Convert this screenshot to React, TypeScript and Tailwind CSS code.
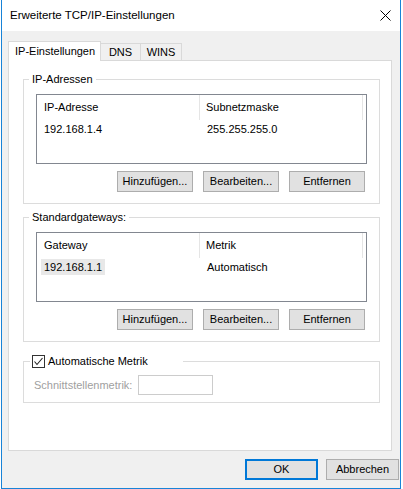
import React from "react";

const FONT = { fontFamily: '"Liberation Sans", Arial, sans-serif' };

function WinButton({ label, width = "w-[76px]" }: { label: string; width?: string }) {
  return (
    <button
      type="button"
      className={`${width} h-[21px] border border-[#adadad] bg-[#e1e1e1] text-[11px] leading-none text-black`}
    >
      {label}
    </button>
  );
}

function ListView({
  cols,
  row,
  selected,
}: {
  cols: [string, string];
  row: [string, string];
  selected?: boolean;
}) {
  return (
    <div className="ml-[12px] mt-[8px] h-[70px] w-[331px] border border-[#828790] bg-white">
      <div className="flex h-[25px] items-center">
        <div className="flex h-full w-[163px] items-center border-r border-[#e5e5e5] pl-[7px]">
          {cols[0]}
        </div>
        <div className="flex h-full w-[163px] items-center border-r border-[#e5e5e5] pl-[6px]">
          {cols[1]}
        </div>
      </div>
      <div className="flex h-[18px] items-center">
        <div className="w-[163px] pl-[4px]">
          <span className={`px-[3px] py-[2px] ${selected ? "bg-[#e8e8e8]" : ""}`}>{row[0]}</span>
        </div>
        <div className="pl-[7px]">{row[1]}</div>
      </div>
    </div>
  );
}

function ButtonRow() {
  return (
    <div className="mt-[7px] flex w-[341px] justify-end gap-[10px]">
      <WinButton label="Hinzufügen..." />
      <WinButton label="Bearbeiten..." />
      <WinButton label="Entfernen" />
    </div>
  );
}

export default function App() {
  return (
    <div className="h-[489px] w-[403px] bg-white text-[11px] text-black" style={FONT}>
      <div className="ml-[1px] flex h-[489px] w-[400px] flex-col border-x border-b border-[#1883d7]">
        {/* title bar */}
        <div className="flex h-[31px] shrink-0 items-center justify-between bg-white pl-[8px] pr-[9px]">
          <span className="text-[11.5px]">Erweiterte TCP/IP-Einstellungen</span>
          <svg width="11" height="11" viewBox="0 0 11 11">
            <path d="M0.5 0.5 L10.5 10.5 M10.5 0.5 L0.5 10.5" stroke="#000" strokeWidth="1" />
          </svg>
        </div>

        <div className="flex flex-1 flex-col bg-[#f0f0f0] pl-[6px] pt-[10px]">
          {/* tabs */}
          <div className="flex h-[19px] items-end">
            <div className="relative z-10 -mb-px flex h-[20px] w-[93px] items-center border-x border-t border-[#d9d9d9] bg-white pl-[6px]">
              IP-Einstellungen
            </div>
            <div className="flex h-[17px] w-[40px] items-center justify-center border-r border-t border-[#d9d9d9]">
              DNS
            </div>
            <div className="flex h-[17px] w-[41px] items-center justify-center border-r border-t border-[#d9d9d9]">
              WINS
            </div>
          </div>

          {/* panel */}
          <div className="h-[391px] w-[384px] border border-[#d9d9d9] bg-white">
            <fieldset className="ml-[14px] mt-[11px] w-[357px] border border-[#dcdcdc] pb-[11px]">
              <legend className="ml-[5px] px-[3px] leading-[14px]">IP-Adressen</legend>
              <ListView cols={["IP-Adresse", "Subnetzmaske"]} row={["192.168.1.4", "255.255.255.0"]} />
              <ButtonRow />
            </fieldset>

            <fieldset className="ml-[14px] mt-[6px] w-[357px] border border-[#dcdcdc] pb-[11px]">
              <legend className="ml-[5px] px-[3px] leading-[14px]">Standardgateways:</legend>
              <ListView cols={["Gateway", "Metrik"]} row={["192.168.1.1", "Automatisch"]} selected />
              <ButtonRow />
            </fieldset>

            <fieldset className="ml-[14px] mt-[12px] w-[357px] border border-[#dcdcdc] pb-[7px]">
              <legend className="ml-[6px] flex h-[14px] w-[153px] items-center pl-[2px]">
                <span className="flex h-[13px] w-[13px] items-center justify-center border border-[#333333] bg-white">
                  <svg width="11" height="11" viewBox="0 0 11 11">
                    <path d="M1.5 5.5 L4 8.5 L9.5 2" fill="none" stroke="#222" strokeWidth="1.1" />
                  </svg>
                </span>
                <span className="ml-[3px]">Automatische Metrik</span>
              </legend>
              <div className="mt-[7px] flex items-center">
                <span className="ml-[10px] w-[104px] text-[#a0a0a0]">Schnittstellenmetrik:</span>
                <div className="h-[20px] w-[75px] border border-[#cccccc] bg-white" />
              </div>
            </fieldset>
          </div>

          {/* bottom buttons */}
          <div className="mt-[8px] flex w-[391px] justify-end gap-[8px]">
            <button
              type="button"
              className="h-[21px] w-[73px] border-2 border-[#0078d7] bg-[#e1e1e1] text-[11px] leading-none"
            >
              OK
            </button>
            <WinButton label="Abbrechen" width="w-[73px]" />
          </div>
        </div>
      </div>
    </div>
  );
}
